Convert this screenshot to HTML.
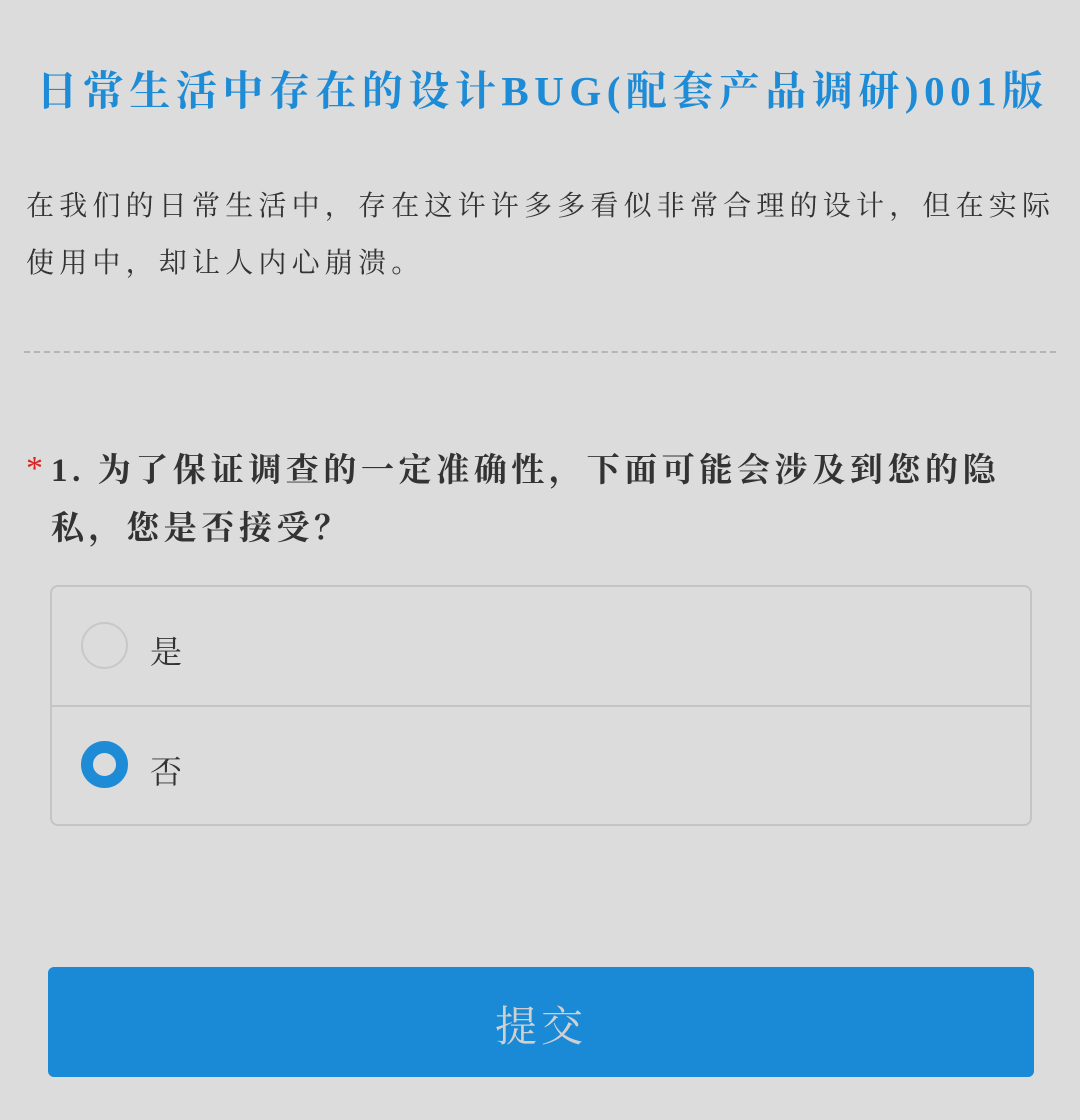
<!DOCTYPE html>
<html><head><meta charset="utf-8"><style>
body{margin:0;width:1080px;height:1120px;background:#dcdcdc;font-family:"Liberation Serif","Noto Serif CJK SC",serif;color:#333;position:relative;overflow:hidden}
.t{position:absolute;left:0;width:1080px;top:58px;text-align:center;font-size:41px;font-weight:bold;color:#1e8bd6;letter-spacing:5.5px;white-space:nowrap;text-indent:5px}
.intro{position:absolute;left:26px;top:178px;width:1054px;font-size:28px;line-height:57px;letter-spacing:5.2px;color:#333}
.intro span{display:block;white-space:nowrap}
.dash{position:absolute;left:24px;top:351px;width:1032px;border-top:2px dashed #b5b5b5}
.q{position:absolute;left:51px;top:442px;width:990px;font-size:33px;font-weight:bold;line-height:58px;letter-spacing:4.6px;color:#333}
.star{position:absolute;left:26px;top:450px;color:#d22;font-size:34px}
.box{position:absolute;left:50px;top:585px;width:978px;height:237px;border:2px solid #c4c4c4;border-radius:8px}
.row{position:absolute;left:0;width:978px;height:118px}
.r1{top:0;border-bottom:2px solid #c4c4c4}
.r2{top:120px}
.c{position:absolute;left:29px;top:35px;width:47px;height:47px;border-radius:50%;border:2px solid #c8c8c8;box-sizing:border-box}
.c.on{border:12px solid #1e8bd6;top:34px}
.l{position:absolute;left:98px;top:40px;font-size:32px;color:#333}
.btn{position:absolute;left:48px;top:967px;width:986px;height:110px;background:#1a8ad6;border-radius:6px;color:#d0d0d0;font-size:42px;text-align:center;line-height:122px;letter-spacing:4px}
</style></head><body>
<div class="t">日常生活中存在的设计BUG(配套产品调研)001版</div>
<div class="intro"><span>在我们的日常生活中，存在这许许多多看似非常合理的设计，但在实际</span><span>使用中，却让人内心崩溃。</span></div>
<div class="dash"></div>
<div class="star">*</div>
<div class="q">1. 为了保证调查的一定准确性，下面可能会涉及到您的隐私，您是否接受？</div>
<div class="box">
<div class="row r1"><div class="c"></div><div class="l">是</div></div>
<div class="row r2"><div class="c on"></div><div class="l">否</div></div>
</div>
<div class="btn">提交</div>
</body></html>
